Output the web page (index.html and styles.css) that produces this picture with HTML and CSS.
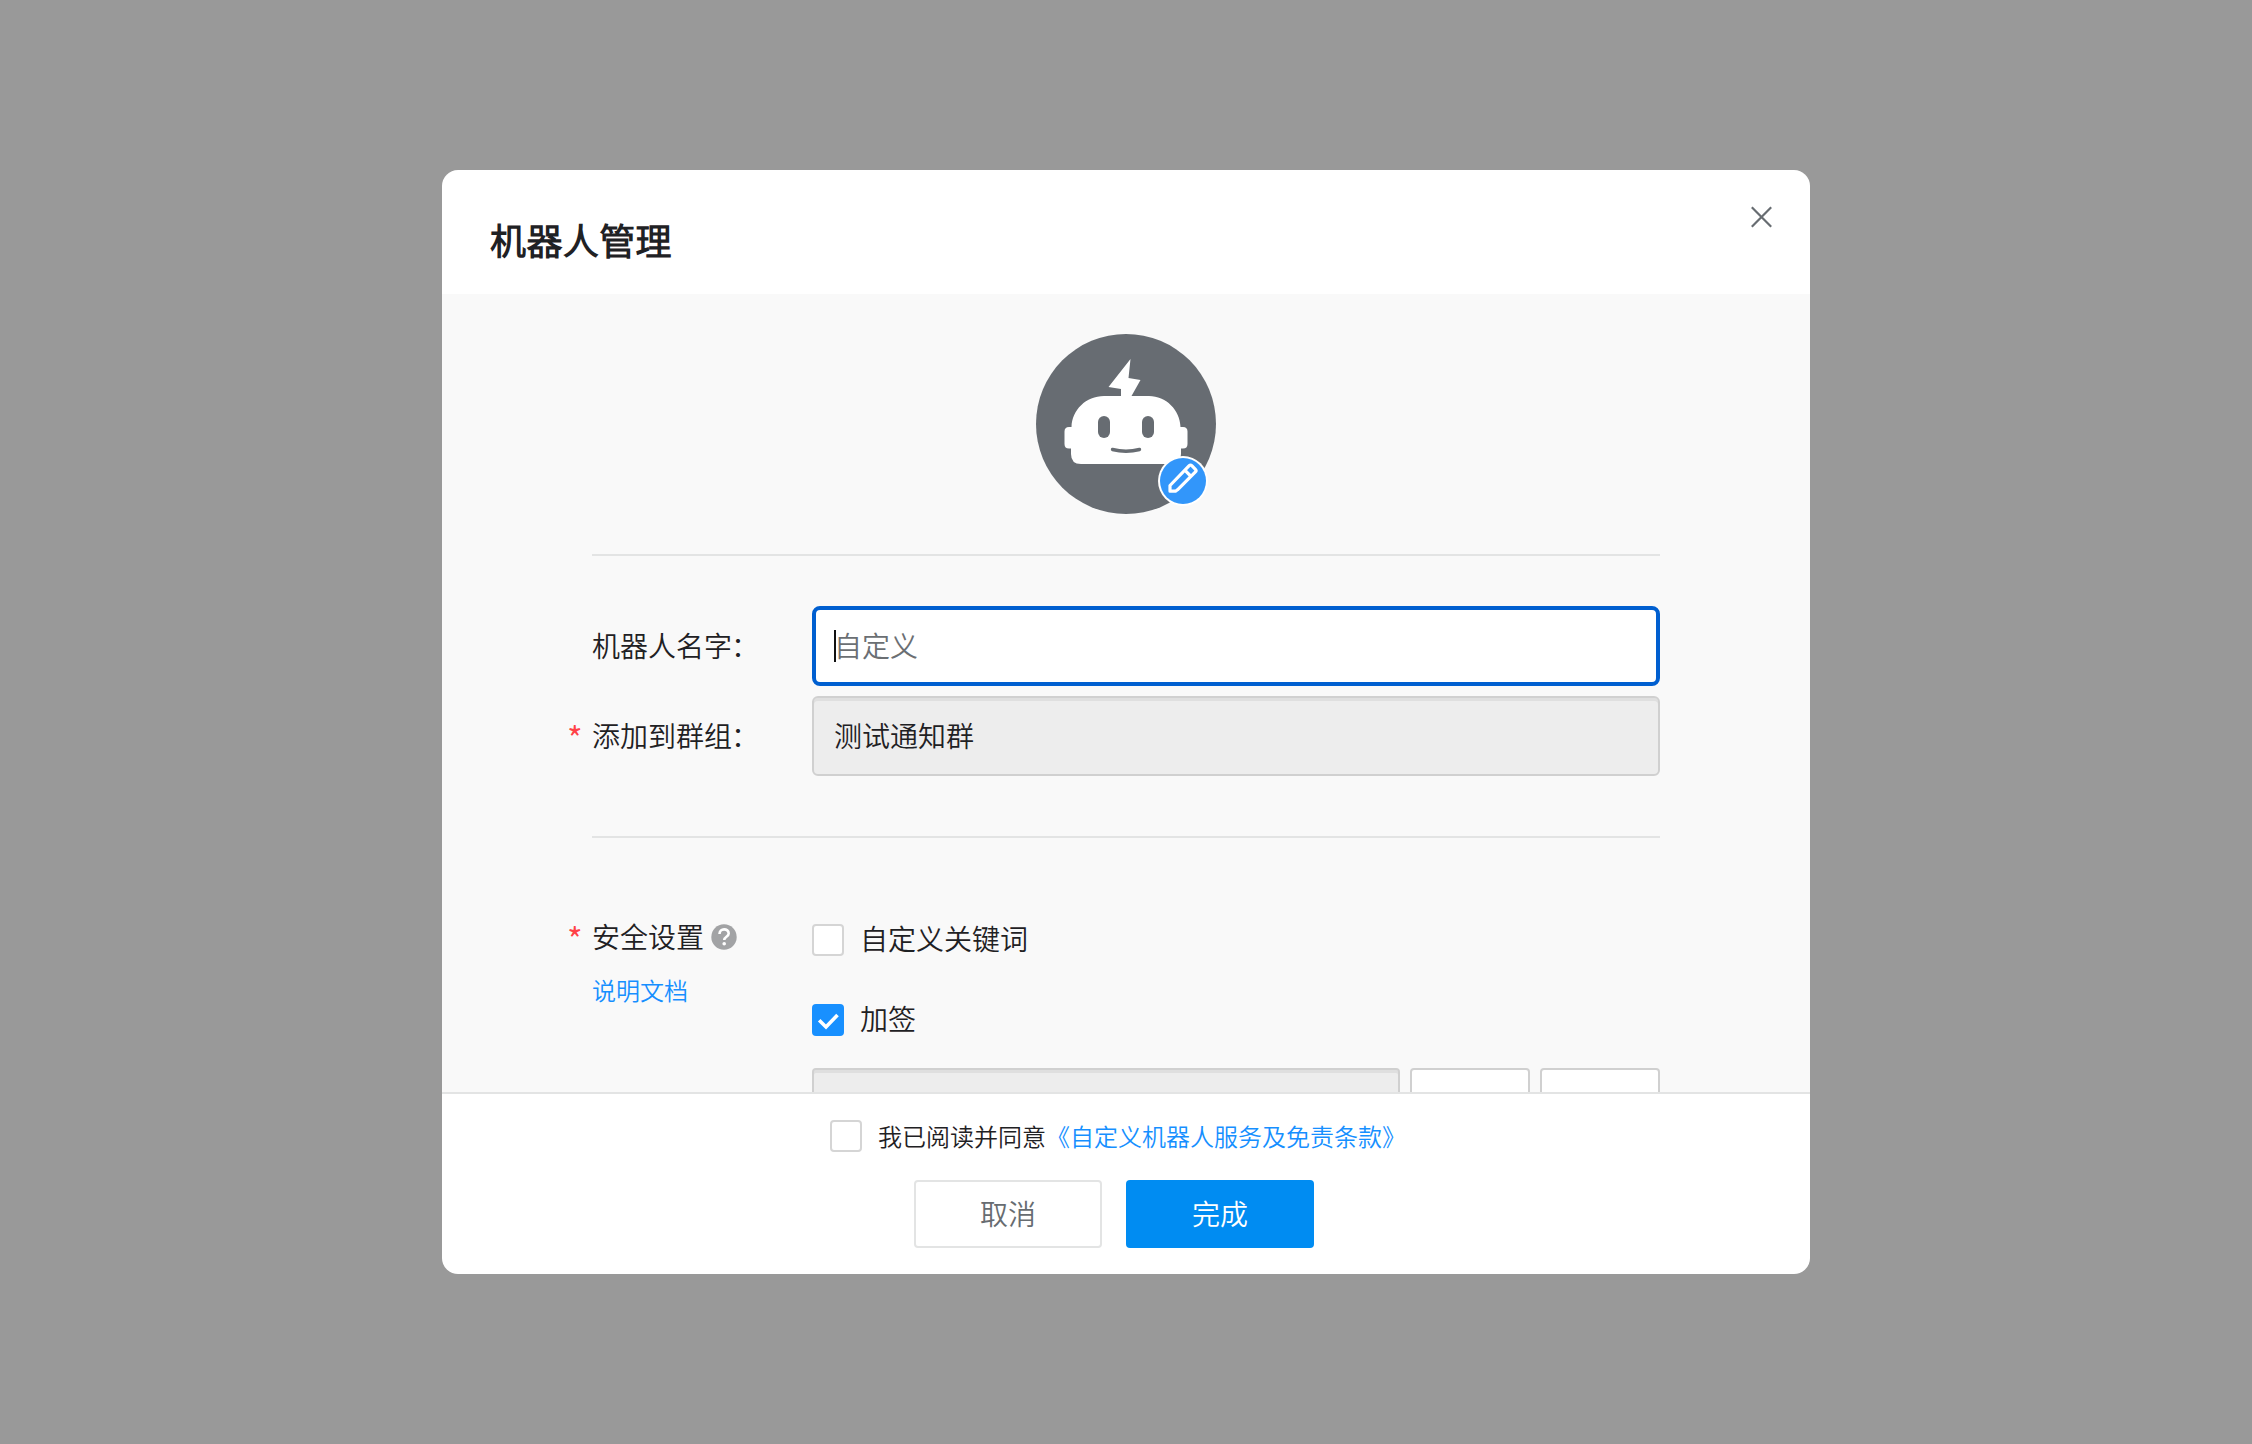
FILE: index.html
```html
<!DOCTYPE html>
<html lang="zh-CN">
<head>
<meta charset="utf-8">
<title>机器人管理</title>
<link rel="stylesheet" href="styles.css">
</head>
<body>
<main class="dialog" role="dialog">
  <header class="header">
    <h1 class="title">机器人管理</h1>
    <svg class="close" width="23" height="22" viewBox="0 0 23 22"><path d="M1.800 1.300 21.200 20.700M21.200 1.300 1.800 20.700" fill="none" stroke="#676c71" stroke-width="2.200"/></svg>
  </header>
  <section class="content">
    <div class="avatar">
      <svg width="180" height="180" viewBox="0 0 180 180">
        <circle cx="90" cy="90" r="90" fill="#676c72"/>
        <path fill="#fff" d="M94.500 25 72.500 53 85 55V62H68C50 62 36 76 35.500 93H33Q28.500 93 28.500 97.500V110Q28.500 114.500 33 114.500H35V120Q35 130 45 130H135Q145 130 145 120V114.500H147Q151.500 114.500 151.500 110V97.500Q151.500 93 147 93H144.500C144 76 130 62 113 62H95.500L104.500 46 92.500 44Z"/>
        <rect x="62" y="82" width="12" height="22" rx="6" fill="#676c72"/>
        <rect x="106" y="82" width="12" height="22" rx="6" fill="#676c72"/>
        <path d="M76.500 115.500Q90 119 103.500 115.500" fill="none" stroke="#676c72" stroke-width="3.400" stroke-linecap="round"/>
      </svg>
      <span class="edit">
        <svg width="50" height="50" viewBox="0 0 50 50">
          <circle cx="25" cy="25" r="25" fill="#fff"/>
          <circle cx="25" cy="25" r="23" fill="#3296fa"/>
          <path d="M12 35.200V29.500L31.200 9.700Q32.500 8.400 33.800 9.700L37.400 13.300Q38.700 14.600 37.400 15.900L19.500 33.800 17.500 35.200ZM26.800 14.200 32.600 20" fill="none" stroke="#fff" stroke-width="3.200" stroke-linejoin="round"/>
        </svg>
      </span>
    </div>
    <div class="fields">
      <div class="row">
        <span class="label">机器人名字<span class="colon">：</span></span>
        <div class="input focused"><span class="caret"></span><span class="placeholder">自定义</span></div>
      </div>
      <div class="row">
        <span class="label required">添加到群组<span class="colon">：</span></span>
        <div class="input disabled"><span class="value">测试通知群</span></div>
      </div>
    </div>
    <div class="security">
      <div class="security-label">
        <span class="label required">安全设置
          <svg class="help" width="26" height="26" viewBox="0 0 26 26"><circle cx="13" cy="13" r="12.700" fill="#a2a3a5"/><path d="M8.500 10C8.500 3.800 17.700 4 17.700 9.500 17.700 12.800 13.200 12.700 13.200 16" fill="none" stroke="#fff" stroke-width="2.600"/><circle cx="13.200" cy="19.800" r="1.800" fill="#fff"/></svg>
        </span>
        <a class="doc-link">说明文档</a>
      </div>
      <div class="options">
        <div class="option"><span class="checkbox"></span><span class="option-text">自定义关键词</span></div>
        <div class="option signed"><span class="checkbox checked"><svg width="32" height="32" viewBox="0 0 32 32"><path d="M7.200 16.300 14 23 25.500 11" fill="none" stroke="#fff" stroke-width="3.600"/></svg></span><span class="option-text">加签</span></div>
        <div class="secret"><div class="secret-value"></div><div class="secret-action"></div><div class="secret-action"></div></div>
      </div>
    </div>
  </section>
  <footer class="footer">
    <div class="agreement"><span class="checkbox"></span><span class="agreement-text">我已阅读并同意<a class="terms">《自定义机器人服务及免责条款》</a></span></div>
    <div class="buttons"><div class="button">取消</div><div class="button primary">完成</div></div>
  </footer>
</main>
</body>
</html>
```
FILE: styles.css
```css
* { box-sizing: border-box; }
body {
  margin: 0;
  height: 1444px;
  display: flex;
  justify-content: center;
  align-items: flex-start;
  padding-top: 170px;
  background: #999;
  color: #1f2124;
  font: 350 28px/40px "Noto Sans CJK SC DemiLight", "Noto Sans CJK SC", sans-serif;
}
.dialog {
  width: 1368px;
  height: 1104px;
  display: flex;
  flex-direction: column;
  background: #fff;
  border-radius: 16px;
  overflow: hidden;
}
.header {
  height: 124px;
  flex: none;
  display: flex;
  justify-content: space-between;
  align-items: flex-start;
  padding: 36px 37px 0 48px;
}
.title { margin: 7px 0 0; font-size: 36px; line-height: 52px; font-weight: 700; letter-spacing: .4px; }
.close { display: block; }
.content {
  height: 798px;
  flex: none;
  padding: 40px 150px 0;
  background: #f9f9f9;
  overflow: hidden;
}
.avatar {
  height: 222px;
  display: flex;
  justify-content: center;
  position: relative;
  border-bottom: 2px solid #e3e4e4;
}
.edit { position: absolute; left: 566px; top: 122px; }
.edit svg, .avatar svg { display: block; }
.fields {
  height: 282px;
  padding-top: 50px;
  border-bottom: 2px solid #e3e4e4;
  display: flex;
  flex-direction: column;
  gap: 10px;
}
.row { display: flex; align-items: center; }
.label { width: 220px; position: relative; white-space: nowrap; padding-bottom: 3px; }
.colon { margin-left: -1px; }
.required::before {
  content: "*";
  position: absolute;
  left: -25px;
  top: 3px;
  color: #ff4147;
  font-size: 34px;
}
.input {
  width: 848px;
  height: 80px;
  display: flex;
  align-items: center;
  padding: 0 20px;
  border: 2px solid #d0d0d0;
  border-radius: 6px;
}
.focused { padding: 0 18px; border: 4px solid #005fd0; border-radius: 8px; background: #fff; }
.caret { width: 2px; height: 32px; background: #111; margin-right: -2px; }
.placeholder { color: #6b6f73; }
.placeholder, .value { padding-bottom: 2px; }
.option-text { padding-bottom: 4px; }
.disabled { background: #ededed; box-shadow: inset 0 3px 0 #dfdfdf; }
.security { display: flex; padding-top: 86px; }
.security-label { width: 220px; display: flex; flex-direction: column; gap: 13px; }
.security-label .label { display: flex; align-items: center; gap: 7px; margin-top: -8px; }
.help { display: block; margin-top: 1px; }
.doc-link { color: #168fff; font-size: 24px; line-height: 36px; }
.option { height: 32px; display: flex; align-items: center; gap: 16px; }
.signed { margin-top: 48px; }
.checkbox {
  width: 32px;
  height: 32px;
  flex: none;
  border: 2px solid #d5d5d5;
  border-radius: 4px;
  background: #fff;
}
.checked { border: 0; background: #1890ff; }
.checked svg { display: block; }
.secret { display: flex; gap: 10px; margin-top: 32px; }
.secret-value { width: 588px; height: 72px; border: 2px solid #d0d0d0; border-radius: 4px; background: #ededed; box-shadow: inset 0 3px 0 #dfdfdf; }
.secret-action { width: 120px; height: 72px; border: 2px solid #d0d0d0; border-radius: 4px; background: #fff; }
.footer { flex: 1; border-top: 2px solid #e3e4e4; padding-top: 26px; }
.agreement { height: 32px; display: flex; align-items: center; gap: 16px; padding-left: 388px; font-size: 24px; }
.terms { color: #168fff; }
.buttons { display: flex; gap: 24px; margin-top: 28px; padding-left: 472px; }
.button {
  width: 188px;
  height: 68px;
  display: flex;
  align-items: center;
  justify-content: center;
  padding-bottom: 2px;
  border: 2px solid #e3e4e4;
  border-radius: 4px;
  color: #676c71;
}
.primary { border: 0; background: #008cf2; color: #fff; }
```
